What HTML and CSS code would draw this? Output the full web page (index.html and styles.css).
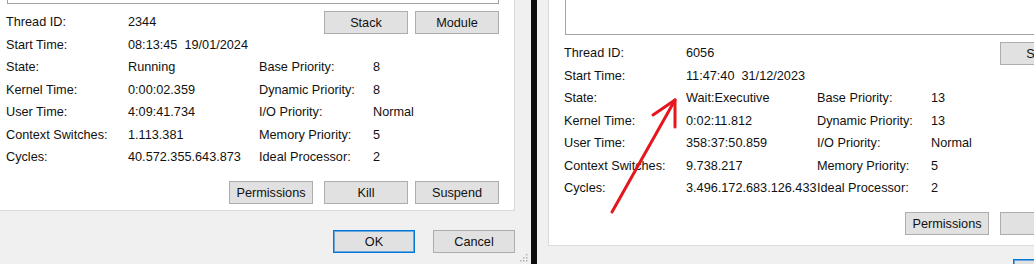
FILE: index.html
```html
<!DOCTYPE html>
<html lang="en">
<head>
    <title>Thread Properties</title>
    <link rel="stylesheet" href="styles.css">
</head>
<body>
    <div class="screen">
        <!-- left dialog -->
        <div class="dlg dlg-left">
            <div class="page">
                <div class="listbox"></div>
                <div class="info">
                    <span class="lbl">Thread ID:</span><span class="val">2344</span>
                    <div class="btns top-btns">
                        <button class="btn">Stack</button>
                        <button class="btn">Module</button>
                    </div>
                    <span class="lbl">Start Time:</span><span class="val">08:13:45  19/01/2024</span>
                    <span class="lbl">State:</span><span class="val">Running</span>
                    <span class="lbl2">Base Priority:</span><span class="val">8</span>
                    <span class="lbl">Kernel Time:</span><span class="val">0:00:02.359</span>
                    <span class="lbl2">Dynamic Priority:</span><span class="val">8</span>
                    <span class="lbl">User Time:</span><span class="val">4:09:41.734</span>
                    <span class="lbl2">I/O Priority:</span><span class="val">Normal</span>
                    <span class="lbl">Context Switches:</span><span class="val">1.113.381</span>
                    <span class="lbl2">Memory Priority:</span><span class="val">5</span>
                    <span class="lbl">Cycles:</span><span class="val">40.572.355.643.873</span>
                    <span class="lbl2">Ideal Processor:</span><span class="val">2</span>
                </div>
                <div class="btns action-btns">
                    <button class="btn btn-perm">Permissions</button>
                    <button class="btn">Kill</button>
                    <button class="btn">Suspend</button>
                </div>
            </div>
            <div class="footer">
                <button class="btn btn-default">OK</button>
                <button class="btn">Cancel</button>
            </div>
            <svg class="grip" width="9" height="9" viewBox="0 0 9 9">
                <rect x="7" y="1" width="1.5" height="1.5" fill="#b4b4b4"/>
                <rect x="4" y="4" width="1.5" height="1.5" fill="#b4b4b4"/>
                <rect x="7" y="4" width="1.5" height="1.5" fill="#b4b4b4"/>
                <rect x="1" y="7" width="1.5" height="1.5" fill="#b4b4b4"/>
                <rect x="4" y="7" width="1.5" height="1.5" fill="#b4b4b4"/>
                <rect x="7" y="7" width="1.5" height="1.5" fill="#b4b4b4"/>
            </svg>
        </div>

        <div class="divider"></div>

        <!-- right dialog -->
        <div class="dlg dlg-right">
            <div class="page">
                <div class="listbox"></div>
                <div class="info">
                    <span class="lbl">Thread ID:</span><span class="val">6056</span>
                    <div class="btns top-btns">
                        <button class="btn">Stack</button>
                        <button class="btn">Module</button>
                    </div>
                    <span class="lbl">Start Time:</span><span class="val">11:47:40  31/12/2023</span>
                    <span class="lbl">State:</span><span class="val">Wait:Executive</span>
                    <span class="lbl2">Base Priority:</span><span class="val">13</span>
                    <span class="lbl">Kernel Time:</span><span class="val">0:02:11.812</span>
                    <span class="lbl2">Dynamic Priority:</span><span class="val">13</span>
                    <span class="lbl">User Time:</span><span class="val">358:37:50.859</span>
                    <span class="lbl2">I/O Priority:</span><span class="val">Normal</span>
                    <span class="lbl">Context Switches:</span><span class="val">9.738.217</span>
                    <span class="lbl2">Memory Priority:</span><span class="val">5</span>
                    <span class="lbl">Cycles:</span><span class="val">3.496.172.683.126.433</span>
                    <span class="lbl2">Ideal Processor:</span><span class="val">2</span>
                </div>
                <div class="btns action-btns">
                    <button class="btn btn-perm">Permissions</button>
                    <button class="btn">Kill</button>
                    <button class="btn">Suspend</button>
                </div>
            </div>
            <div class="footer">
                <button class="btn btn-default">OK</button>
                <button class="btn">Cancel</button>
            </div>
        </div>

        <!-- red annotation arrow -->
        <svg class="arrow" width="1034" height="264" viewBox="0 0 1034 264">
            <g stroke="#e5161d" stroke-width="3" stroke-linecap="round" fill="none">
                <line x1="612" y1="212" x2="675" y2="100"/>
                <line x1="675" y1="100" x2="653" y2="115"/>
                <line x1="675" y1="100" x2="675" y2="127"/>
            </g>
        </svg>
    </div>
</body>
</html>
```

FILE: styles.css
```css
body {
    margin: 0;
    padding: 0;
    font-family: "Liberation Sans", Arial, sans-serif;
    font-size: 12.7px;
    color: #111;
}

.screen {
    position: relative;
    display: flex;
    width: 1034px;
    height: 264px;
    overflow: hidden;
    background-color: #f0f0f0;
}

.dlg {
    position: relative;
    flex: none;
    background-color: #f0f0f0;
}

.dlg-left {
    width: 531px;
}

.dlg-right {
    width: 670px;
}

.divider {
    flex: none;
    width: 6px;
    background-color: #0d0d0d;
}

.page {
    box-sizing: border-box;
    background-color: #fff;
    border: 1px solid #dadada;
    padding: 12px 15px 6px 15px;
}

.dlg-left .page {
    width: 525px;
    margin-left: -10px;
    margin-top: -109px;
}

.dlg-right .page {
    width: 643px;
    margin-left: 11px;
    margin-top: -78px;
    padding-bottom: 10px;
}

.listbox {
    height: 100px;
    margin-left: 1px;
    box-sizing: border-box;
    border: 1px solid #a3a3a3;
}

.info {
    display: grid;
    grid-template-columns: 122px 131px 114px 1fr;
    grid-auto-rows: 22.5px;
    align-items: center;
    margin-top: 7px;
}

.lbl {
    grid-column: 1;
}

.lbl2 {
    grid-column: 3;
}

.val {
    white-space: pre;
    overflow: hidden;
}

.btns {
    display: flex;
    justify-content: flex-end;
    gap: 7px;
}

.top-btns {
    grid-column: 3 / 5;
    grid-row: 1;
    align-self: start;
    justify-self: end;
}

.action-btns {
    margin-top: 12.5px;
}

.btn {
    box-sizing: border-box;
    width: 84px;
    height: 23px;
    padding: 0;
    font-family: inherit;
    font-size: 12.7px;
    color: #111;
    background-color: #e1e1e1;
    border: 1px solid #adadad;
}

.btn-perm {
    margin-right: 4px;
}

.footer {
    display: flex;
    justify-content: flex-end;
    gap: 18px;
    padding: 19px 16px 0 0;
}

.dlg-right .footer {
    padding-top: 13px;
    padding-right: 0;
    margin-right: 12px;
}

.footer .btn {
    width: 82px;
}

.btn-default {
    border: 1px solid #0078d7;
    box-shadow: inset 0 0 0 1px #6aa6dc;
}

.grip {
    position: absolute;
    right: 3px;
    bottom: 2px;
}

.arrow {
    position: absolute;
    left: 0;
    top: 0;
    pointer-events: none;
}
```
